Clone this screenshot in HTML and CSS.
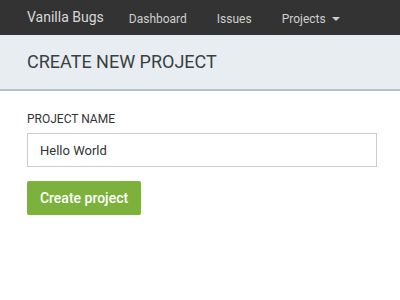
FILE: index.html
```html
<!DOCTYPE html>
<html>
<head>
<meta charset="utf-8">
<link rel="stylesheet" href="styles.css">
</head>
<body>
<nav class="navbar">
  <span class="brand">Vanilla Bugs</span>
  <a class="nav-link">Dashboard</a>
  <a class="nav-link">Issues</a>
  <a class="nav-link">Projects <span class="caret"></span></a>
</nav>
<header class="page-header">
  <h1 class="title">CREATE NEW PROJECT</h1>
</header>
<main class="content">
  <label class="label">PROJECT NAME</label>
  <input class="input" type="text" value="Hello World">
  <button class="btn">Create project</button>
</main>
</body>
</html>
```
FILE: styles.css
```css
* { box-sizing: border-box; }
body {
  margin: 0;
  font-family: Roboto, "Liberation Sans", sans-serif;
  background: #fff;
  color: #333;
}
.navbar {
  height: 35px;
  background: #333333;
  display: flex;
  align-items: center;
  padding-left: 27px;
}
.brand {
  color: #d8d8d8;
  font-size: 14px;
  margin-right: 25px;
  margin-top: -2px;
}
.nav-link {
  color: #cfcfcf;
  font-size: 12px;
  margin-right: 30px;
  display: flex;
  align-items: center;
  margin-top: 2px;
}
.caret {
  display: inline-block;
  width: 0;
  height: 0;
  margin-left: 6px;
  border-left: 4px solid transparent;
  border-right: 4px solid transparent;
  border-top: 4px solid #cfcfcf;
}
.page-header {
  height: 56px;
  background: #e8edf1;
  border-bottom: 2px solid #b9c1c8;
  display: flex;
  align-items: center;
  padding-left: 27px;
}
.title {
  margin: 0;
  font-size: 18px;
  font-weight: 400;
  color: #3a3f44;
  margin-top: -1px;
}
.content {
  padding: 20px 23px 0 27px;
  display: flex;
  flex-direction: column;
  align-items: flex-start;
}
.label {
  font-size: 12px;
  color: #333;
  margin-bottom: 6px;
  line-height: 16px;
}
.input {
  width: 350px;
  height: 34px;
  border: 1px solid #ccc;
  font-family: Roboto, "Liberation Sans", sans-serif;
  font-size: 13px;
  padding: 0 12px;
  color: #333;
  border-radius: 0;
  outline: none;
}
.btn {
  margin-top: 14px;
  width: 114px;
  height: 34px;
  background: #7cb13b;
  border: none;
  border-radius: 2px;
  color: #fff;
  font-family: Roboto, "Liberation Sans", sans-serif;
  font-size: 14px;
  font-weight: 500;
}
```
